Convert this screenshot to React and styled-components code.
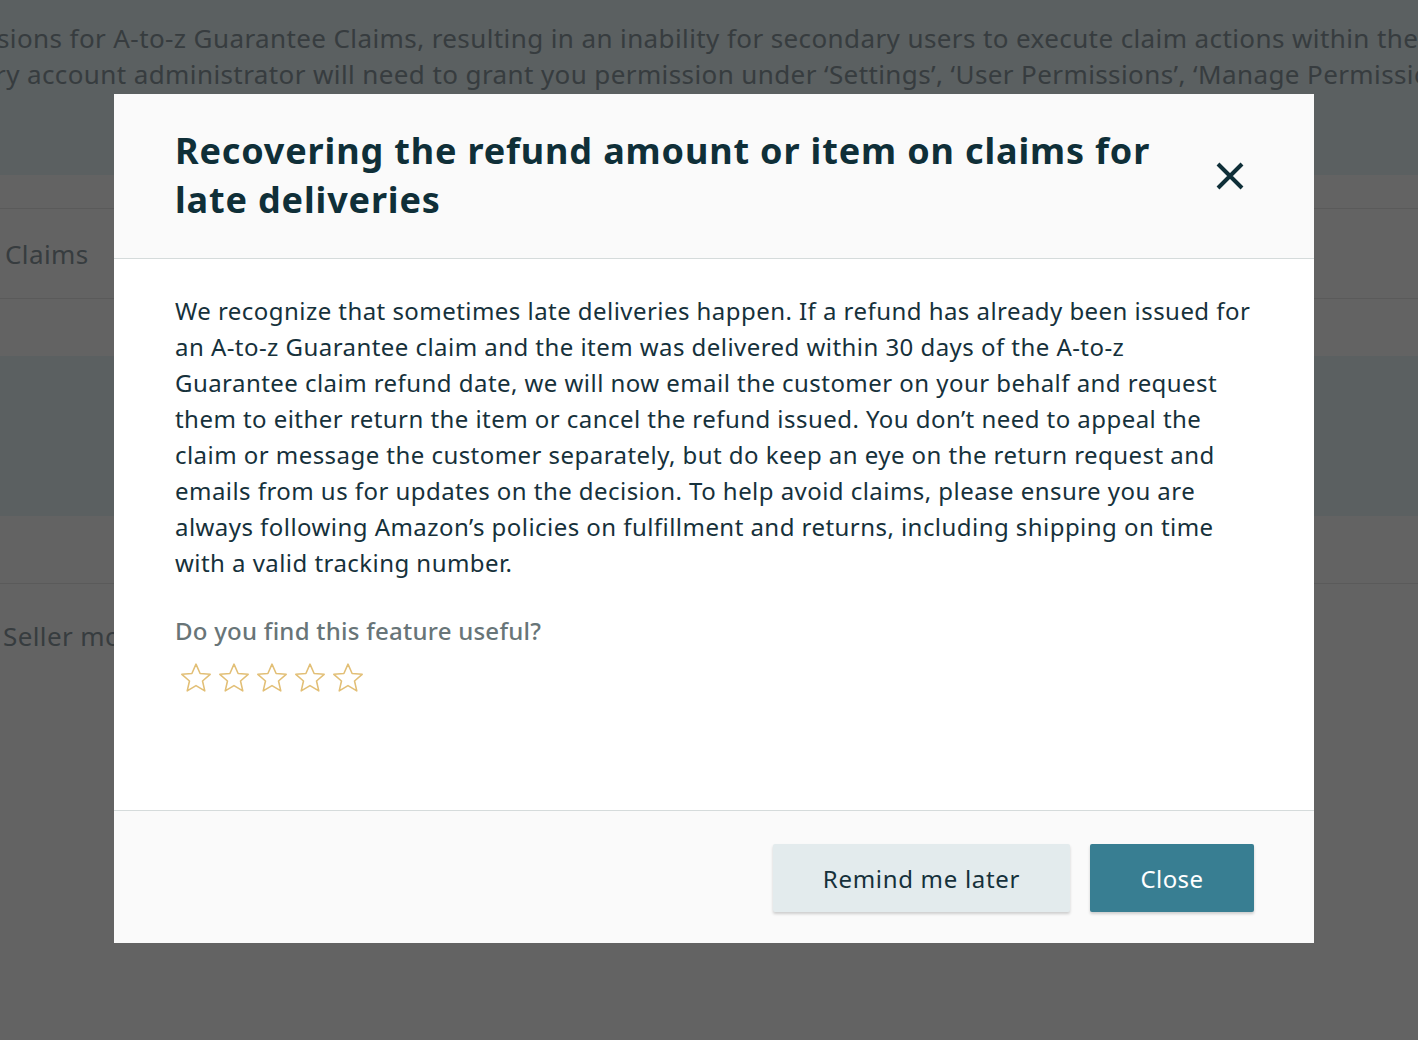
import React from "react";
import styled, { createGlobalStyle } from "styled-components";

const Global = createGlobalStyle`
  html, body { margin: 0; padding: 0; }
  body {
    width: 1418px;
    height: 1040px;
    overflow: hidden;
    font-family: "Noto Sans", "Open Sans", sans-serif;
    background: #ffffff;
  }
`;

const Page = styled.div`
  position: relative;
  width: 1418px;
  height: 1040px;
  overflow: hidden;
  background: #ffffff;
`;

const Alert = styled.div`
  background: #e9f6f9;
  height: ${(p) => p.$h}px;
  overflow: hidden;
  padding-top: ${(p) => p.$pt || 0}px;
  box-sizing: border-box;
`;

const AlertLine = styled.div`
  white-space: nowrap;
  font-size: 26px;
  line-height: 36px;
  letter-spacing: 0.4px;
  color: #8d9ca2;
  margin-left: ${(p) => p.$ml}px;
`;

const Spacer = styled.div`
  height: ${(p) => p.$h}px;
  border-bottom: ${(p) => (p.$line ? "1px solid #e7e7e7" : "none")};
  box-sizing: border-box;
`;

const TabRow = styled.div`
  height: 91px;
  display: flex;
  align-items: center;
  padding-left: 5px;
  border-top: 1px solid #e7e7e7;
  border-bottom: 1px solid #e7e7e7;
  box-sizing: border-box;
  font-size: 26px;
  letter-spacing: 0.4px;
  color: #8d9ca2;
`;

const BgText = styled.div`
  font-size: 26px;
  letter-spacing: 0.4px;
  color: #8d9ca2;
  padding: ${(p) => p.$pad};
`;

const Overlay = styled.div`
  position: absolute;
  inset: 0;
  background: rgba(0, 0, 0, 0.61);
`;

const Modal = styled.div`
  position: absolute;
  left: 114px;
  top: 94px;
  width: 1200px;
  height: 849px;
  background: #ffffff;
  display: flex;
  flex-direction: column;
`;

const Header = styled.div`
  background: #fafafa;
  border-bottom: 1px solid #d5dbdb;
  height: 165px;
  box-sizing: border-box;
  display: flex;
  align-items: center;
  padding: 0 61px;
  gap: 40px;
`;

const Title = styled.h2`
  margin: 0;
  flex: 1;
  font-size: 36px;
  line-height: 49px;
  font-weight: 700;
  color: #0f2f38;
  letter-spacing: 0.85px;
  padding-bottom: 3px;
`;

const CloseX = styled.button`
  border: none;
  background: transparent;
  padding: 0;
  width: 32px;
  height: 32px;
  display: flex;
  align-items: center;
  justify-content: center;
  margin-right: 7px;
  cursor: pointer;
`;

const Body = styled.div`
  flex: 1;
  padding: 34px 61px 0 61px;
  color: #16313b;
`;

const Para = styled.p`
  margin: 0;
  font-size: 24px;
  line-height: 36px;
  letter-spacing: 0.45px;
  white-space: nowrap;
`;

const Question = styled.div`
  margin-top: 32px;
  font-size: 24px;
  line-height: 36px;
  letter-spacing: 0.25px;
  color: #687578;
  font-weight: 500;
`;

const Stars = styled.div`
  display: flex;
  gap: 4px;
  margin-top: 12px;
  margin-left: 4px;
`;

const Footer = styled.div`
  background: #fafafa;
  border-top: 1px solid #d5dbdb;
  height: 133px;
  box-sizing: border-box;
  display: flex;
  justify-content: flex-end;
  align-items: flex-start;
  padding: 33px 60px 0 0;
  gap: 20px;
`;

const Button = styled.button`
  height: 68px;
  width: ${(p) => p.$w}px;
  border: none;
  border-radius: 2px;
  font-family: "Noto Sans", "Open Sans", sans-serif;
  font-size: 24px;
  letter-spacing: ${(p) => (p.$primary ? "0.4px" : "0.7px")};
  background: ${(p) => (p.$primary ? "#387e92" : "#e3ebed")};
  color: ${(p) => (p.$primary ? "#ffffff" : "#16313b")};
  box-shadow: 0 2px 3px rgba(0, 0, 0, 0.18);
  cursor: pointer;
`;

const Star = () => (
  <svg width="34" height="34" viewBox="0 0 24 24">
    <path
      d="M12 2.2l2.9 6.6 7.1.6-5.4 4.7 1.6 7-6.2-3.7-6.2 3.7 1.6-7L2 9.4l7.1-.6z"
      fill="none"
      stroke="#e2bf76"
      strokeWidth="1.1"
      strokeLinejoin="round"
    />
  </svg>
);

export default function App() {
  return (
    <Page>
      <Global />
      <Alert $h={175} $pt={20}>
        <AlertLine $ml={-3}>
          sions for A-to-z Guarantee Claims, resulting in an inability for secondary users to execute claim actions within the
        </AlertLine>
        <AlertLine $ml={-5}>
          ry account administrator will need to grant you permission under ‘Settings’, ‘User Permissions’, ‘Manage Permissions’.
        </AlertLine>
      </Alert>
      <Spacer $h={33} />
      <TabRow>Claims</TabRow>
      <Spacer $h={57} />
      <Alert $h={160} />
      <Spacer $h={68} $line />
      <BgText $pad="34px 0 0 3px">Seller monitoring</BgText>
      <Overlay />
      <Modal role="dialog">
        <Header>
          <Title>
            Recovering the refund amount or item on claims for late deliveries
          </Title>
          <CloseX aria-label="Close">
            <svg width="30" height="30" viewBox="0 0 30 30">
              <path
                d="M3 3L27 27M27 3L3 27"
                stroke="#0f2f38"
                strokeWidth="4"
                strokeLinecap="butt"
              />
            </svg>
          </CloseX>
        </Header>
        <Body>
          <Para>
            We recognize that sometimes late deliveries happen. If a refund has already been issued for
            <br />
            an A-to-z Guarantee claim and the item was delivered within 30 days of the A-to-z
            <br />
            Guarantee claim refund date, we will now email the customer on your behalf and request
            <br />
            them to either return the item or cancel the refund issued. You don’t need to appeal the
            <br />
            claim or message the customer separately, but do keep an eye on the return request and
            <br />
            emails from us for updates on the decision. To help avoid claims, please ensure you are
            <br />
            always following Amazon’s policies on fulfillment and returns, including shipping on time
            <br />
            with a valid tracking number.
          </Para>
          <Question>Do you find this feature useful?</Question>
          <Stars>
            <Star />
            <Star />
            <Star />
            <Star />
            <Star />
          </Stars>
        </Body>
        <Footer>
          <Button $w={297}>Remind me later</Button>
          <Button $w={164} $primary>
            Close
          </Button>
        </Footer>
      </Modal>
    </Page>
  );
}
